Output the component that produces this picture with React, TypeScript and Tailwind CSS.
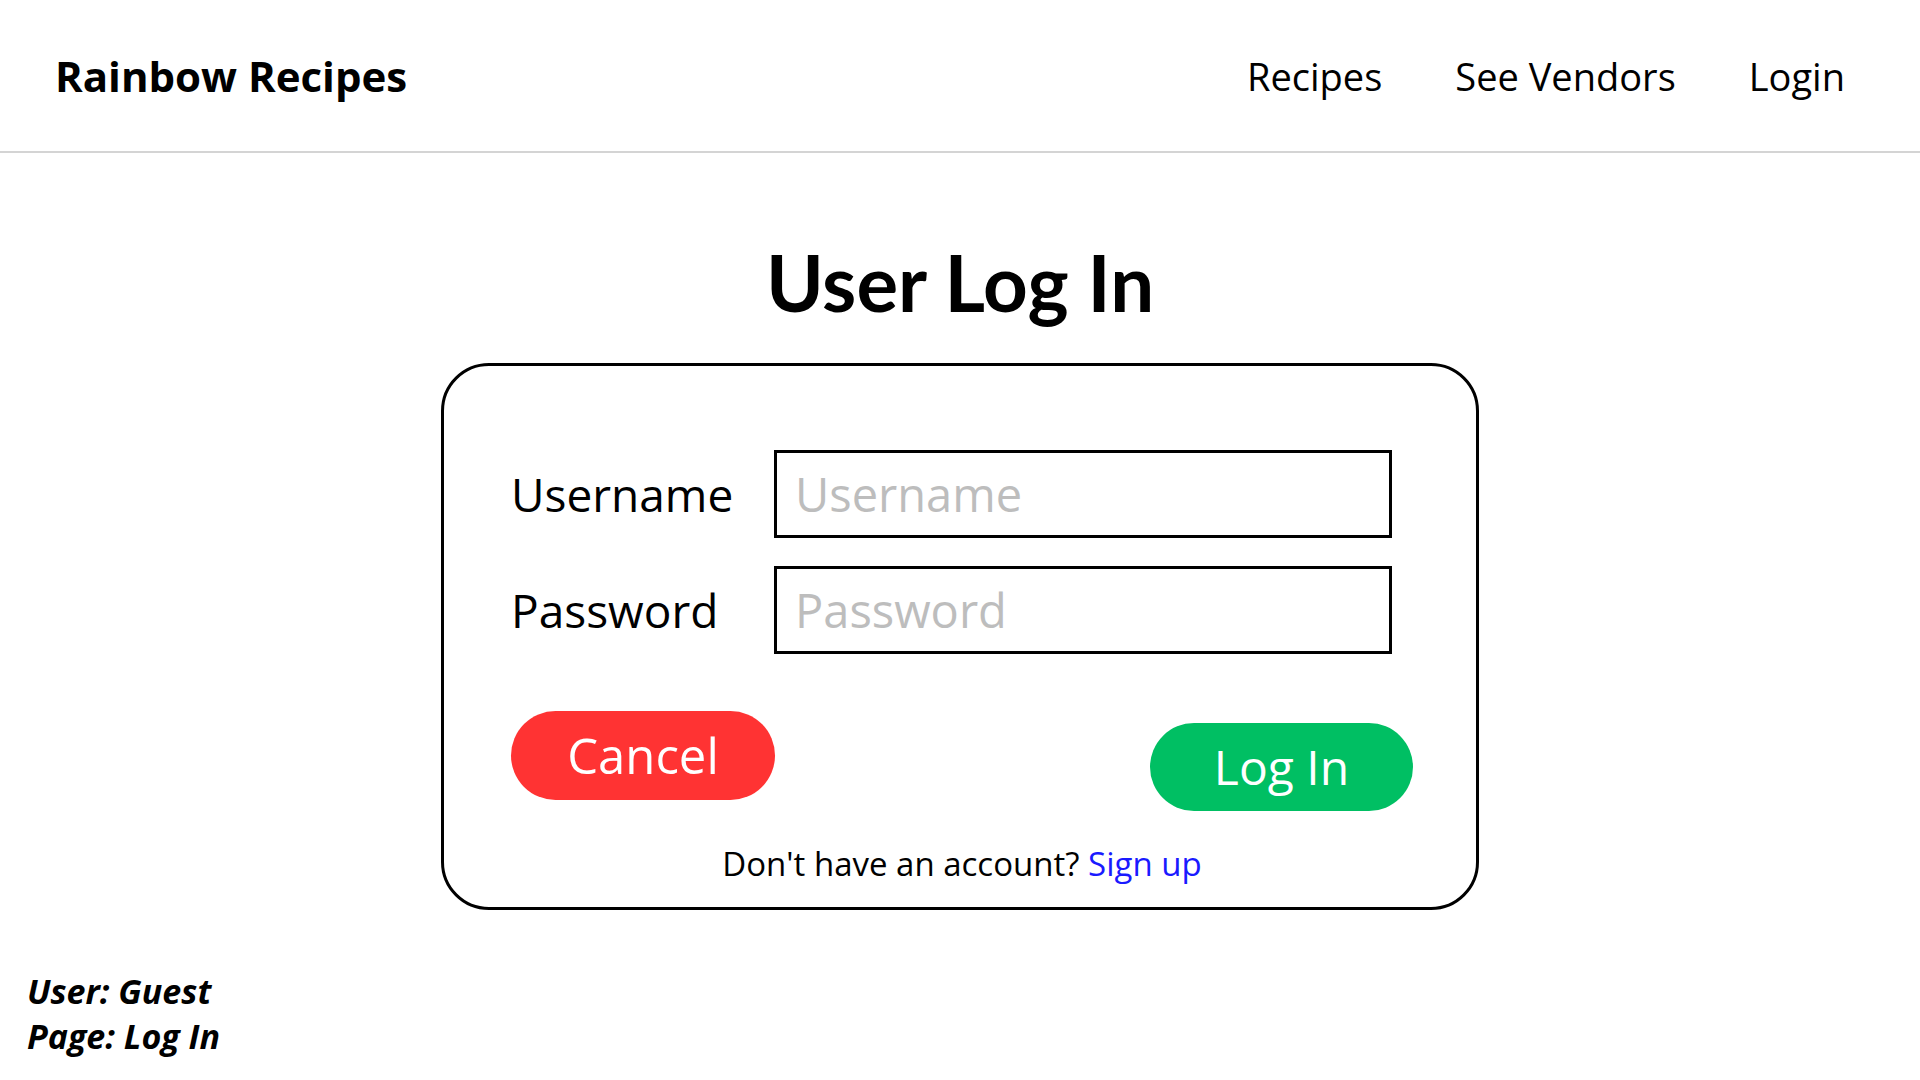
import React from "react";

const font = { fontFamily: '"Open Sans", "Noto Sans", sans-serif' };
const titleFont = { fontFamily: 'Lato, "Open Sans", sans-serif' };

function NavBar() {
  return (
    <header className="flex h-[153px] items-center justify-between border-b-2 border-[#d4d4d4] pl-[55px] pr-[75px]">
      <h1 className="text-[42px] font-bold leading-none text-black">Rainbow Recipes</h1>
      <nav className="flex items-center gap-[73px] text-[38px] leading-none text-black">
        <a href="#">Recipes</a>
        <a href="#">See Vendors</a>
        <a href="#">Login</a>
      </nav>
    </header>
  );
}

function LoginCard() {
  return (
    <div className="mx-auto mt-[42px] w-[1038px] rounded-[48px] border-[3px] border-black pl-[67px] pr-[63px] pt-[84px] pb-[23px]">
      <div className="flex flex-col gap-[28px]">
        <div className="flex items-center">
          <label className="w-[263px] text-[46px] leading-none text-black">Username</label>
          <input
            placeholder="Username"
            className="h-[88px] w-[618px] border-[3px] border-black px-[18px] text-[47px] text-black outline-none placeholder:text-[#bdbdbd]"
          />
        </div>
        <div className="flex items-center">
          <label className="w-[263px] text-[46px] leading-none text-black">Password</label>
          <input
            type="password"
            placeholder="Password"
            className="h-[88px] w-[618px] border-[3px] border-black px-[18px] text-[47px] text-black outline-none placeholder:text-[#bdbdbd]"
          />
        </div>
      </div>

      <div className="mt-[57px] flex items-start justify-between">
        <button className="h-[89px] w-[264px] rounded-full bg-[#ff3333] text-[49px] leading-none text-white">
          Cancel
        </button>
        <button className="mt-[12px] h-[88px] w-[263px] rounded-full bg-[#00bf63] text-[48px] leading-none text-white">
          Log In
        </button>
      </div>

      <p className="mt-[33px] text-center text-[33px] leading-[40px] text-black">
        Don't have an account? <a href="#" className="text-[#1a1aff]">Sign up</a>
      </p>
    </div>
  );
}

export default function App() {
  return (
    <div className="min-h-screen bg-white" style={font}>
      <NavBar />
      <main>
        <h2 className="mt-[90px] text-center text-[78px] font-bold leading-none text-black" style={titleFont}>
          User Log In
        </h2>
        <LoginCard />
      </main>
      <footer className="mt-[59px] pl-[27px] text-[34px] font-bold italic leading-[45px] text-black">
        <p>User: Guest</p>
        <p>Page: Log In</p>
      </footer>
    </div>
  );
}
